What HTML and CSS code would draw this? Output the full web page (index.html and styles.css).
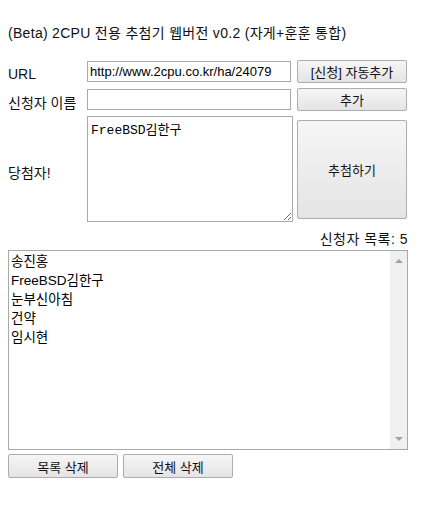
FILE: index.html
```html
<!DOCTYPE html>
<html lang="ko">
<head>
    <meta charset="UTF-8">
    <title>2CPU 추첨기</title>
    <link rel="stylesheet" href="styles.css">
</head>
<body>
    <div class="title">(Beta) 2CPU 전용 추첨기 웹버전 v0.2 (자게+훈훈 통합)</div>

    <div class="form-grid">
        <label class="label" for="url">URL</label>
        <input type="text" id="url" class="field" value="http://www.2cpu.co.kr/ha/24079">
        <button type="button" class="btn">[신청] 자동추가</button>

        <label class="label" for="name">신청자 이름</label>
        <input type="text" id="name" class="field">
        <button type="button" class="btn">추가</button>

        <label class="label winner-label" for="winner">당첨자!</label>
        <textarea id="winner" class="winner">FreeBSD김한구</textarea>
        <button type="button" class="btn draw-btn">추첨하기</button>
    </div>

    <div class="count">신청자 목록: 5</div>

    <div class="list">
        <div class="list-items">
            <div>송진홍</div>
            <div>FreeBSD김한구</div>
            <div>눈부신아침</div>
            <div>건약</div>
            <div>임시현</div>
        </div>
        <div class="scrollbar">
            <span class="arrow up"></span>
            <span class="arrow down"></span>
        </div>
    </div>

    <div class="actions">
        <button type="button" class="btn small-btn">목록 삭제</button>
        <button type="button" class="btn small-btn">전체 삭제</button>
    </div>
</body>
</html>
```

FILE: styles.css
```css
body {
    margin: 0;
    padding: 0 8px;
    width: 400px;
    font-family: "Liberation Sans", "Noto Sans CJK KR", sans-serif;
    font-size: 13px;
    color: #111;
    background: #fff;
}

.title {
    margin-top: 24px;
    height: 18px;
    line-height: 18px;
    font-size: 14px;
    letter-spacing: 0.3px;
}

.form-grid {
    display: grid;
    grid-template-columns: 75px 206px 110px;
    column-gap: 4px;
    margin-top: 18px;
}

.label {
    display: flex;
    align-items: center;
    font-size: 14px;
}

.field {
    box-sizing: border-box;
    height: 21px;
    width: 204px;
    margin: 1px 0 0;
    padding: 0 2px;
    border: 1px solid #a9a9a9;
    font-family: "Liberation Sans", "Noto Sans CJK KR", sans-serif;
    font-size: 13px;
    color: #000;
}

.btn {
    box-sizing: border-box;
    width: 110px;
    height: 23px;
    margin: 0 0 5px 0;
    padding: 0;
    border: 1px solid #adadad;
    border-radius: 2px;
    background: linear-gradient(#f6f6f6, #e4e4e4);
    font-family: "Liberation Sans", "Noto Sans CJK KR", sans-serif;
    font-size: 13px;
    color: #111;
}

.winner-label {
    padding-top: 4px;
}

.winner {
    box-sizing: border-box;
    width: 206px;
    height: 106px;
    margin: 0;
    padding: 2px 3px;
    border: 1px solid #a9a9a9;
    font-family: "Liberation Mono", "Noto Sans CJK KR", monospace;
    font-size: 13px;
    color: #000;
    resize: both;
}

.draw-btn {
    height: 99px;
    margin-top: 4px;
}

.count {
    text-align: right;
    margin-top: 6px;
    height: 18px;
    line-height: 18px;
    font-size: 14px;
    letter-spacing: 0.5px;
}

.list {
    box-sizing: border-box;
    display: flex;
    width: 400px;
    height: 200px;
    margin-top: 2px;
    border: 1px solid #a9a9a9;
}

.list-items {
    flex: 1;
    padding: 1px 2px;
    line-height: 19px;
    font-size: 13.5px;
    color: #000;
}

.scrollbar {
    position: relative;
    width: 17px;
    background: #f0f0f0;
}

.arrow {
    position: absolute;
    left: 5px;
    width: 0;
    height: 0;
    border-left: 4px solid transparent;
    border-right: 4px solid transparent;
}

.arrow.up {
    top: 8px;
    border-bottom: 4px solid #a3a3a3;
}

.arrow.down {
    bottom: 8px;
    border-top: 4px solid #a3a3a3;
}

.actions {
    display: flex;
    gap: 5px;
    margin-top: 4px;
}

.small-btn {
    height: 24px;
    margin: 0;
}
```
